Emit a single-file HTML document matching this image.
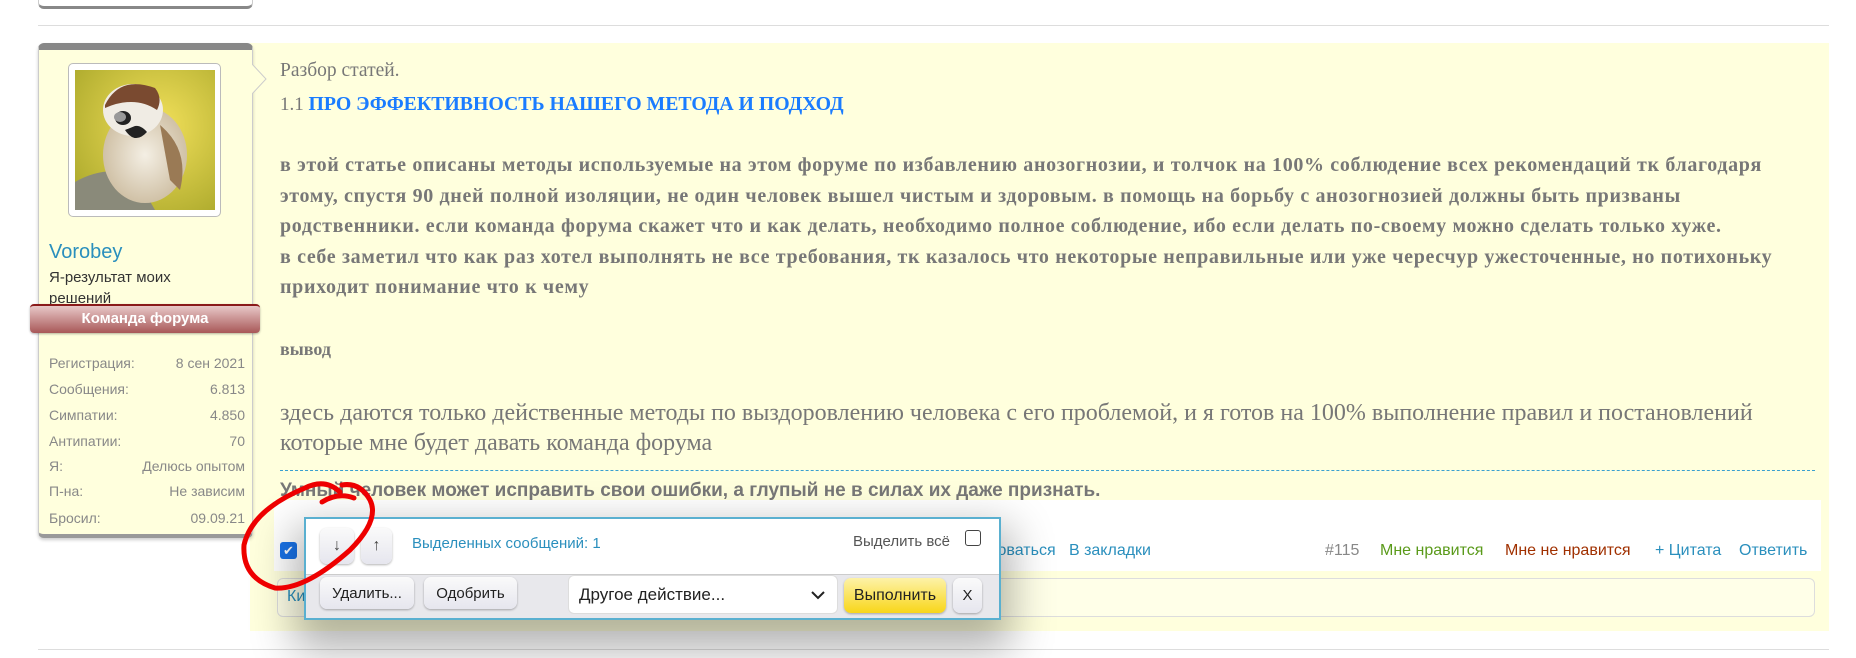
<!DOCTYPE html>
<html><head><meta charset="utf-8">
<style>
*{margin:0;padding:0;box-sizing:border-box}
body{width:1856px;height:658px;background:#fff;position:relative;overflow:hidden;font-family:"Liberation Sans","DejaVu Sans",sans-serif}
.abs{position:absolute}
.serif{font-family:"Liberation Serif","DejaVu Serif",serif}
.stat{position:absolute;left:49px;width:196px;font-size:14px;color:#888;display:flex;justify-content:space-between}
.btn{position:absolute;background:linear-gradient(#fafafa,#e6e6ee);border-radius:7px;box-shadow:0 1px 2px rgba(0,0,0,.3);font-size:15px;color:#222;display:flex;align-items:center;justify-content:center}
.act{position:absolute;top:542px;font-size:16px;color:#2a8fbd}
</style></head><body>
<div class="abs" style="left:38px;top:-10px;width:215px;height:19px;border:1px solid #ccc;border-bottom:3px solid #888;border-radius:0 0 6px 6px"></div>
<div class="abs" style="left:38px;top:25px;width:1791px;height:1px;background:#ddd"></div>
<div class="abs" style="left:250px;top:43px;width:1579px;height:588px;background:#ffffdd"></div>
<div class="abs" style="left:38px;top:43px;width:215px;height:495px;background:#ffffdd;border:1px solid #ccc;border-top:7px solid #888;border-bottom:4px solid #999;border-radius:6px;box-shadow:0 2px 3px rgba(0,0,0,.2)"></div>
<svg class="abs" style="left:252px;top:64px" width="16" height="30"><path d="M0 0 L14 15 L0 30" fill="#ffffdd" stroke="#ccc"/></svg>
<div class="abs" style="left:68px;top:63px;width:153px;height:154px;border:1px solid #bbb;border-radius:5px;background:#fff;padding:6px">
<svg width="140" height="140" viewBox="0 0 140 140">
<defs><radialGradient id="bg" cx="0.6" cy="0.4" r="0.8"><stop offset="0" stop-color="#f2e05a"/><stop offset="1" stop-color="#a9a72a"/></radialGradient>
<radialGradient id="bd" cx="0.5" cy="0.5" r="0.6"><stop offset="0" stop-color="#f4efe4"/><stop offset="1" stop-color="#c9b89a"/></radialGradient></defs>
<rect width="140" height="140" fill="url(#bg)"/>
<path d="M0 112 Q30 95 60 105 L80 140 L0 140Z" fill="#8a8a7a"/>
<ellipse cx="70" cy="85" rx="42" ry="48" fill="url(#bd)"/>
<ellipse cx="58" cy="40" rx="30" ry="26" fill="#f0ece4"/>
<path d="M30 35 Q45 5 80 18 Q88 28 82 40 Q60 25 30 38Z" fill="#7a4a30"/>
<ellipse cx="48" cy="48" rx="8" ry="7" fill="#222"/>
<ellipse cx="45" cy="47" rx="6" ry="5" fill="#999"/>
<path d="M50 60 Q60 75 72 62 Q66 55 60 56Z" fill="#222"/>
<path d="M85 55 Q115 80 105 120 L95 110Z" fill="#9a7a55"/>
</svg></div>
<div class="abs" style="left:49px;top:241px;font-size:20px;color:#2a8fbd">Vorobey</div>
<div class="abs" style="left:49px;top:267px;font-size:15px;line-height:21px;color:#333;width:180px">Я-результат моих решений</div>
<div class="abs" style="left:30px;top:304px;width:230px;height:29px;border-radius:4px;background:linear-gradient(#e8c8c8,#a85858);border-top:2px solid #8a1a1a;box-shadow:0 1px 2px rgba(0,0,0,.3);color:#fff;font-weight:bold;font-size:15px;text-align:center;line-height:26px">Команда форума</div>
<div class="stat" style="top:355px"><span>Регистрация:</span><span>8 сен 2021</span></div>
<div class="stat" style="top:381px"><span>Сообщения:</span><span>6.813</span></div>
<div class="stat" style="top:407px"><span>Симпатии:</span><span>4.850</span></div>
<div class="stat" style="top:433px"><span>Антипатии:</span><span>70</span></div>
<div class="stat" style="top:458px"><span>Я:</span><span>Делюсь опытом</span></div>
<div class="stat" style="top:483px"><span>П-на:</span><span>Не зависим</span></div>
<div class="stat" style="top:510px"><span>Бросил:</span><span>09.09.21</span></div>
<div class="abs serif" style="left:280px;top:60px;font-size:19.5px;color:#777">Разбор статей.</div>
<div class="abs serif" style="left:280px;top:93px;font-size:19px;color:#777">1.1 <b style="color:#1a7cff;font-size:19.8px">ПРО ЭФФЕКТИВНОСТЬ НАШЕГО МЕТОДА И ПОДХОД</b></div>
<div class="abs serif" style="left:280px;top:150px;width:1540px;font-size:20px;letter-spacing:0.65px;line-height:30.5px;font-weight:bold;color:#777">в этой статье описаны методы используемые на этом форуме по избавлению анозогнозии, и толчок на 100% соблюдение всех рекомендаций тк благодаря этому, спустя 90 дней полной изоляции, не один человек вышел чистым и здоровым. в помощь на борьбу с анозогнозией должны быть призваны родственники. если команда форума скажет что и как делать, необходимо полное соблюдение, ибо если делать по-своему можно сделать только хуже.<br>в себе заметил что как раз хотел выполнять не все требования, тк казалось что некоторые неправильные или уже чересчур ужесточенные, но потихоньку приходит понимание что к чему</div>
<div class="abs serif" style="left:280px;top:339px;font-size:18px;font-weight:bold;color:#777">вывод</div>
<div class="abs serif" style="left:280px;top:398px;width:1535px;font-size:24px;line-height:30px;color:#777">здесь даются только действенные методы по выздоровлению человека с его проблемой, и я готов на 100% выполнение правил и постановлений которые мне будет давать команда форума</div>
<div class="abs" style="left:280px;top:470px;width:1535px;border-top:1px dashed #3aa0d0"></div>
<div class="abs" style="left:280px;top:480px;font-size:19px;font-weight:bold;color:#777">Умный человек может исправить свои ошибки, а глупый не в силах их даже признать.</div>
<div class="abs" style="left:274px;top:500px;width:1547px;height:71px;background:#fff"></div>
<div class="abs" style="left:280px;top:542px;width:17px;height:17px;background:#1a73e8;border-radius:3px;color:#fff;font-size:13px;text-align:center;line-height:17px">✔</div>
<div class="act" style="left:988px">ловаться&nbsp;&nbsp; В закладки</div>
<div class="act" style="left:1325px;color:#888">#115</div>
<div class="act" style="left:1380px;color:#5a9a1a">Мне нравится</div>
<div class="act" style="left:1505px;color:#a03000">Мне не нравится</div>
<div class="act" style="left:1655px">+ Цитата</div>
<div class="act" style="left:1739px">Ответить</div>
<div class="abs" style="left:277px;top:578px;width:1538px;height:39px;border:1px solid #ddd;border-radius:6px;background:#ffffe8"></div>
<div class="abs" style="left:287px;top:588px;font-size:16px;color:#2a8fbd">Ки</div>
<div class="abs" style="left:38px;top:649px;width:1791px;height:1px;background:#ddd"></div>
<div class="abs" style="left:304px;top:517px;width:697px;height:103px;border:2px solid #5ab0d0;background:#fff;box-shadow:0 20px 40px 10px rgba(0,0,0,.3)">
<div class="abs" style="left:0;top:55px;width:693px;height:44px;background:#e8e8ec;border-top:1px solid #ccc"></div>
<div class="btn" style="left:14px;top:9px;width:34px;height:36px;font-size:16px;color:#444">↓</div>
<div class="btn" style="left:55px;top:9px;width:31px;height:36px;font-size:16px;color:#444">↑</div>
<div class="abs" style="left:106px;top:16px;font-size:15px;color:#2a8fbd">Выделенных сообщений: 1</div>
<div class="abs" style="left:547px;top:14px;font-size:15px;color:#555">Выделить всё</div>
<div class="abs" style="left:659px;top:11px;width:16px;height:16px;border:1px solid #444;border-radius:3px;background:#fff"></div>
<div class="btn" style="left:14px;top:58px;width:94px;height:32px">Удалить...</div>
<div class="btn" style="left:118px;top:58px;width:93px;height:32px">Одобрить</div>
<div class="abs" style="left:262px;top:56px;width:270px;height:39px;background:#fff;border:1px solid #ddd;border-radius:6px;font-size:17px;color:#222;line-height:37px;padding-left:10px">Другое действие...<svg class="abs" style="right:12px;top:15px" width="14" height="9"><path d="M1 1 L7 7 L13 1" fill="none" stroke="#222" stroke-width="2"/></svg></div>
<div class="btn" style="left:538px;top:59px;width:102px;height:35px;background:linear-gradient(#fdf2a8,#f8d61a);font-size:16px">Выполнить</div>
<div class="btn" style="left:647px;top:59px;width:29px;height:35px">X</div>
</div>
<svg class="abs" style="left:230px;top:470px" width="160" height="130"><path d="M110 22 Q95 8 75 18 Q22 40 14 75 Q12 108 45 118 Q75 120 120 80 Q150 50 140 30 Q130 12 112 15 M92 32 Q108 22 124 28" fill="none" stroke="#ee0000" stroke-width="5" stroke-linecap="round"/></svg>
</body></html>
